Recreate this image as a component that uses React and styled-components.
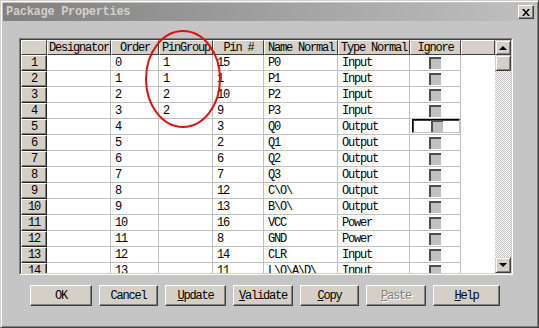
import styled, { createGlobalStyle } from "styled-components";

const GlobalStyle = createGlobalStyle`
  html, body {
    margin: 0;
    padding: 0;
    background: #c5c5c5;
  }
  body {
    font-family: "Liberation Mono", "Courier New", monospace;
  }
`;

const Window = styled.div`
  position: relative;
  width: 539px;
  height: 328px;
  box-sizing: border-box;
  background: #c5c5c5;
  border: 1px solid;
  border-color: #d4d0c8 #404040 #404040 #d4d0c8;
  box-shadow: inset 1px 1px #fff, inset -1px -1px #808080;
  padding: 2px;
  display: flex;
  flex-direction: column;
`;

const TitleBar = styled.div`
  height: 18px;
  display: flex;
  align-items: center;
  justify-content: space-between;
  padding: 0 2px 0 3px;
  background: linear-gradient(to right, #808080, #c0c0c0);
`;

const Title = styled.span`
  color: #d4d0c8;
  font-weight: bold;
  font-size: 12px;
  letter-spacing: -0.3px;
`;

const CloseButton = styled.div`
  width: 16px;
  height: 14px;
  box-sizing: border-box;
  background: #d4d0c8;
  border: 1px solid;
  border-color: #fff #404040 #404040 #fff;
  box-shadow: inset -1px -1px #808080;
  display: flex;
  align-items: center;
  justify-content: center;
`;

const Content = styled.div`
  padding: 17px 0 0 16px;
`;

const GridFrame = styled.div`
  width: 494px;
  height: 237px;
  box-sizing: border-box;
  border: 1px solid;
  border-color: #808080 #fff #fff #808080;
`;

const GridInner = styled.div`
  height: 100%;
  box-sizing: border-box;
  border: 1px solid;
  border-color: #404040 #d4d0c8 #d4d0c8 #404040;
  background: #fff;
  display: flex;
  overflow: hidden;
`;

const Table = styled.div`
  flex: 1;
  display: grid;
  grid-template-columns: 26px 64px 48px 54px 51px 74px 72px 51px 34px;
  grid-template-rows: 15px;
  grid-auto-rows: 16px;
  align-content: start;
  overflow: hidden;
  font-size: 12px;
  letter-spacing: -1.2px;
  color: #000;
`;

const HeadCell = styled.div`
  box-sizing: border-box;
  background: #d4d0c8;
  border: 1px solid;
  border-color: #fff #404040 #404040 #fff;
  display: flex;
  align-items: center;
  justify-content: center;
  white-space: nowrap;
  overflow: hidden;
`;

const RowHead = styled(HeadCell)`
  border-color: #fff #202020 #202020 #fff;
  box-shadow: inset -1px -1px #808080;
`;

const Cell = styled.div`
  box-sizing: border-box;
  border-right: 1px solid #c0c0c0;
  border-bottom: 1px solid #c0c0c0;
  padding-left: 4px;
  display: flex;
  align-items: center;
  white-space: nowrap;
  overflow: hidden;
`;

const CheckCell = styled(Cell)`
  padding: 0;
  justify-content: center;
`;

const FillCell = styled.div`
  background: #fff;
`;

const EditFrame = styled.div`
  align-self: stretch;
  flex: 1;
  margin: 0 0 1px 2px;
  box-sizing: border-box;
  border: 1px solid;
  border-color: #000 #c0c0c0 #c0c0c0 #000;
  box-shadow: inset 1px 1px #404040;
  display: flex;
  align-items: center;
  justify-content: center;
  padding-left: 2px;
`;

const CheckBox = styled.div`
  width: 12px;
  height: 12px;
  box-sizing: border-box;
  background: #c0c0c0;
  border-top: 2px solid #505050;
  border-left: 2px solid #505050;
`;

const ScrollBar = styled.div`
  width: 16px;
  display: flex;
  flex-direction: column;
  background-color: #fff;
  background-image: repeating-conic-gradient(#c0c0c0 0 25%, #fff 0 50%);
  background-size: 2px 2px;
`;

const ScrollButton = styled.div`
  height: ${(p) => p.$h}px;
  box-sizing: border-box;
  background: #d4d0c8;
  border: 1px solid;
  border-color: #d4d0c8 #404040 #404040 #d4d0c8;
  box-shadow: inset 1px 1px #fff, inset -1px -1px #808080;
  display: flex;
  align-items: center;
  justify-content: center;
  margin-top: ${(p) => (p.$bottom ? "auto" : "0")};
`;

const Arrow = styled.div`
  width: 0;
  height: 0;
  border-left: 4px solid transparent;
  border-right: 4px solid transparent;
  ${(p) =>
    p.$down ? "border-top: 4px solid #000;" : "border-bottom: 4px solid #000;"}
`;

const ButtonRow = styled.div`
  display: flex;
  gap: 7px;
  margin: 10px 0 0 11px;
`;

const Button = styled.div`
  width: ${(p) => p.$w}px;
  height: 21px;
  box-sizing: border-box;
  background: #d4d0c8;
  border: 1px solid;
  border-color: #fff #404040 #404040 #fff;
  box-shadow: inset -1px -1px #808080;
  display: flex;
  align-items: center;
  justify-content: center;
  font-size: 12px;
  letter-spacing: -1.2px;
  color: ${(p) => (p.$disabled ? "#808080" : "#000")};
  text-shadow: ${(p) => (p.$disabled ? "1px 1px #fff" : "none")};
  u {
    text-underline-offset: 1px;
  }
`;

const Annotation = styled.svg`
  position: absolute;
  left: 0;
  top: 0;
  pointer-events: none;
`;

const columns = ["", "Designator", "Order", "PinGroup", "Pin #", "Name Normal", "Type Normal", "Ignore", ""];

const rows = [
  ["0", "1", "15", "P0", "Input"],
  ["1", "1", "1", "P1", "Input"],
  ["2", "2", "10", "P2", "Input"],
  ["3", "2", "9", "P3", "Input"],
  ["4", "", "3", "Q0", "Output"],
  ["5", "", "2", "Q1", "Output"],
  ["6", "", "6", "Q2", "Output"],
  ["7", "", "7", "Q3", "Output"],
  ["8", "", "12", "C\\O\\", "Output"],
  ["9", "", "13", "B\\O\\", "Output"],
  ["10", "", "16", "VCC", "Power"],
  ["11", "", "8", "GND", "Power"],
  ["12", "", "14", "CLR", "Input"],
  ["13", "", "11", "L\\O\\A\\D\\", "Input"],
];

const buttons = [
  { label: "OK", w: 62 },
  { label: "Cancel", w: 59 },
  { key: "U", rest: "pdate", w: 61 },
  { key: "V", rest: "alidate", w: 60 },
  { key: "C", rest: "opy", w: 59 },
  { key: "P", rest: "aste", w: 60, disabled: true },
  { key: "H", rest: "elp", w: 67 },
];

export default function App() {
  return (
    <>
      <GlobalStyle />
      <Window>
        <TitleBar>
          <Title>Package Properties</Title>
          <CloseButton>
            <svg width="8" height="7" viewBox="0 0 8 7">
              <path d="M0 0h2l2 2.5L6 0h2L5 3.5 8 7H6L4 4.5 2 7H0l3-3.5z" fill="#000" />
            </svg>
          </CloseButton>
        </TitleBar>
        <Content>
          <GridFrame>
            <GridInner>
              <Table>
                {columns.map((c, i) => (
                  <HeadCell key={"h" + i}>{c}</HeadCell>
                ))}
                {rows.map((r, i) => [
                  <RowHead key={"n" + i}>{i + 1}</RowHead>,
                  <Cell key={"d" + i} />,
                  ...r.map((v, j) => <Cell key={"c" + i + "-" + j}>{v}</Cell>),
                  <CheckCell key={"k" + i}>
                    {i === 4 ? (
                      <EditFrame>
                        <CheckBox />
                      </EditFrame>
                    ) : (
                      <CheckBox />
                    )}
                  </CheckCell>,
                  <FillCell key={"f" + i} />,
                ])}
              </Table>
              <ScrollBar>
                <ScrollButton $h={15}>
                  <Arrow />
                </ScrollButton>
                <ScrollButton $h={16} />
                <ScrollButton $h={16} $bottom>
                  <Arrow $down />
                </ScrollButton>
              </ScrollBar>
            </GridInner>
          </GridFrame>
          <ButtonRow>
            {buttons.map((b, i) => (
              <Button key={i} $w={b.w} $disabled={b.disabled}>
                {b.label ? (
                  b.label
                ) : (
                  <span>
                    <u>{b.key}</u>
                    {b.rest}
                  </span>
                )}
              </Button>
            ))}
          </ButtonRow>
        </Content>
        <Annotation width="539" height="328">
          <ellipse cx="182" cy="78" rx="37" ry="48" fill="none" stroke="#e01010" strokeWidth="2" />
        </Annotation>
      </Window>
    </>
  );
}
